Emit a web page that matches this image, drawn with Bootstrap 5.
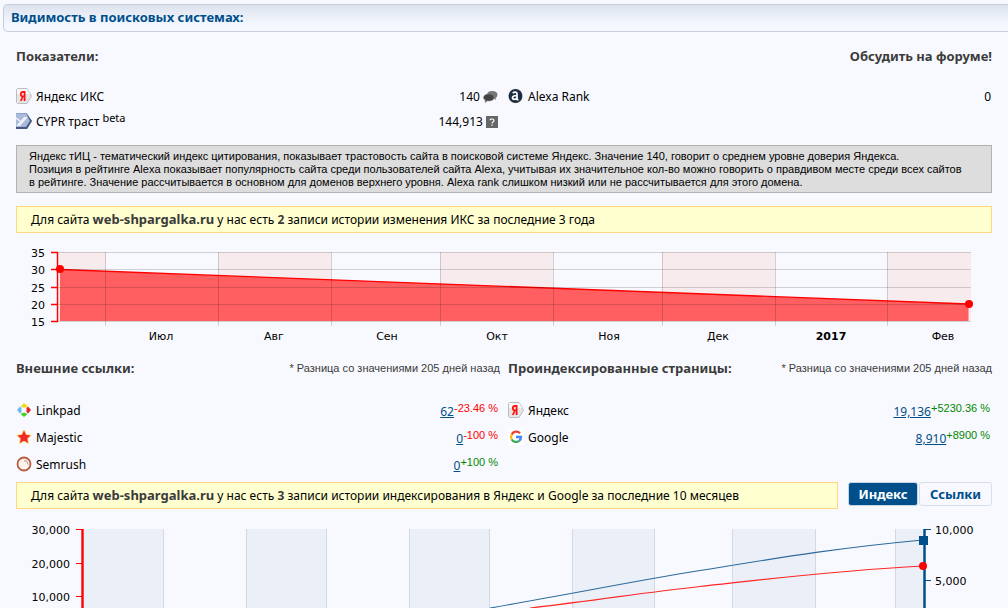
<!DOCTYPE html>
<html lang="ru">
<head>
<meta charset="utf-8">
<meta name="viewport" content="width=device-width, initial-scale=1">
<title>Видимость в поисковых системах</title>
<link href="https://cdn.jsdelivr.net/npm/bootstrap@5.3.0/dist/css/bootstrap.min.css" rel="stylesheet">
<script src="https://cdn.jsdelivr.net/npm/bootstrap@5.3.0/dist/js/bootstrap.bundle.min.js" defer></script>
<style>
  :root { --brand: #004f8b; --page: #f8f9fe; }
  body { background: var(--page); color: #000; font: 12px/16px "Noto Sans", sans-serif; }
  .title-bar { height: 28px; margin: 4px 0 0 3px; padding-left: 7px; border: 1px solid #c5cddd; border-right: 0; border-radius: 5px 0 0 5px; background: linear-gradient(#dde3ee, #f3f7ff 75%, #f5f9ff); }
  .title-bar h1 { font-size: 13px; line-height: 24px; font-weight: 700; color: var(--brand); }
  h2 { font-size: 13px; line-height: 18px; font-weight: 700; color: #3b3b3b; margin: 0; }
  .intro { padding: 15px 0 19px; }
  .section-head { padding: 5px 0 20px; }
  .pair { display: grid; grid-template-columns: 1fr 1fr; column-gap: 8px; }
  .forum { font-size: 13px; line-height: 18px; font-weight: 700; color: #3b3b3b; text-decoration: none; }
  .stats { width: 100%; }
  .stats th { font-weight: 400; padding: 0; }
  .stats td { padding: 0 2px 0 0; text-align: right; }
  .stats svg { display: inline-block; vertical-align: middle; }
  .stats th svg { margin-right: 4px; margin-top: -2px; }
  .metrics tr { height: 25px; }
  .metrics.single td { padding-right: 1px; }
  .links tr { height: 27px; }
  .links td { padding-top: 3px; }
  .links a { color: var(--brand); }
  .delta { font: 11px/12px "Liberation Sans", sans-serif; position: relative; top: -4px; }
  .beta { font-size: 11px; line-height: 12px; top: -4px; vertical-align: baseline; }
  .down { color: #f00; }
  .up { color: #080; }
  .fine { font: 11px/13px "Liberation Sans", sans-serif; }
  .note { color: #3b3b3b; }
  .about { background: #ddd; border: 1px solid #b2b2b2; padding: 4px 12px 3px; margin: 11px 0 13px; }
  .notice { background: #ffffcf; border: 1px solid #ffd783; padding: 0 14px; line-height: 24px; }
  .notice b { color: #3b3b3b; }
  .notice .host { font-size: 13px; }
  .tab { font-size: 13px; line-height: 20px; font-weight: 700; padding: 0; height: 24px; border: 1px solid #d6e0ec; border-radius: 3px; color: var(--brand); }
  .tab.active { background: var(--brand); color: #fff; border-color: #c5d6e6; width: 70px; margin: 0 1px 0 10px; }
  .tab-wide { width: 73px; }
  .plot { width: 100%; height: auto; display: block; font: 11px "DejaVu Sans", sans-serif; }
</style>
</head>
<body>
<svg class="d-none">
  <linearGradient id="tagFill" x2="0" y2="1"><stop stop-color="#fdfdfd"/><stop offset="1" stop-color="#c8c8c8"/></linearGradient>
  <symbol id="yandex" viewBox="0 0 16 16"><path d="M1.500.5h9.500l4.500 7.500-4.500 7.500H1.500l-1-1v-13z" fill="#e6e6e6" stroke="#bdbdbd"/><path d="M1 1h10l3 5H1z" fill="#f8f8f8"/><path d="M8.600 3v10M8.600 4H6.800C4.200 4 4.200 8.300 6.800 8.300h1.800M6.800 8.500 4.800 13" fill="none" stroke="#f11" stroke-width="1.800"/></symbol>
</svg>

<header class="title-bar"><h1 class="m-0">Видимость в поисковых системах:</h1></header>

<main class="px-3">
  <div class="intro d-flex justify-content-between">
    <h2>Показатели:</h2>
    <a class="forum" href="#">Обсудить на форуме!</a>
  </div>

  <div class="pair">
    <table class="stats metrics">
      <tr>
        <th><svg width="16" height="16"><use href="#yandex"/></svg>Яндекс ИКС</th>
        <td>140 <svg width="15" height="12" viewBox="0 0 15 12"><path d="M9 0c3.500 0 5.500 1.500 5.500 3.500S13 7 12.500 7l.8 2-3-1.500C7 8 4 6 4 3.800S6 0 9 0z" fill="#777"/><path d="M6 3c3 0 5 1.500 5 3.600S9 10 6 10l-1.500-.2L2 11.500l.3-2.500C1 8.500.5 7.600.5 6.600.5 4.500 3 3 6 3z" fill="#444" stroke="#888" stroke-width=".5"/></svg></td>
      </tr>
      <tr>
        <th><svg width="16" height="16" viewBox="0 0 16 16"><path d="M0 0h11l5 8-5 8H0z" fill="#8fa4cc"/><path d="M0 14h10l4-6-3.500-7L16 8l-5 8H0z" fill="#465a80"/><path d="M0 1h10l3.500 7L10 13.500H0z" fill="#a9badb"/><path d="m1 13 8-9M3 13 11 4M0 5l4 3" stroke="#f8f9fe" stroke-width="1.200" fill="none"/></svg>CYPR траст <sup class="beta">beta</sup></th>
        <td>144,913 <svg width="12" height="12" viewBox="0 0 12 12"><path d="M0 0h12v12H0z" fill="#666"/><path d="M4 4.300C4 2.500 8 2.500 8 4.500 8 6 6 5.800 6 7.500M6 8.500v1.200" fill="none" stroke="#fff" stroke-width="1.200"/></svg></td>
      </tr>
    </table>
    <table class="stats metrics single align-self-start">
      <tr>
        <th><svg width="16" height="16" viewBox="0 0 16 16"><circle cx="7.500" cy="8" r="7.500" fill="#eee3d2"/><circle cx="7.500" cy="8" r="6.900" fill="#1b2c46"/><path d="M4.800 5.200C6 3.800 9 3.700 9 5.800v5.400c0 .6.500.6 1.500.4M9 7.500c-2.500 0-4.500.5-4.500 2.200C4.500 11.800 8 12 9 9.500" fill="none" stroke="#fff" stroke-width="1.700"/></svg>Alexa Rank</th>
        <td>0</td>
      </tr>
    </table>
  </div>

  <p class="about fine">Яндекс тИЦ - тематический индекс цитирования, показывает трастовость сайта в поисковой системе Яндекс. Значение 140, говорит о среднем уровне доверия Яндекса.<br>Позиция в рейтинге Alexa показывает популярность сайта среди пользователей сайта Alexa, учитывая их значительное кол-во можно говорить о правдивом месте среди всех сайтов<br>в рейтинге. Значение рассчитывается в основном для доменов верхнего уровня. Alexa rank слишком низкий или не рассчитывается для этого домена.</p>

  <p class="notice mb-2">Для сайта <b class="host">web-shpargalka.ru</b> у нас есть <b>2</b> записи истории изменения ИКС за последние 3 года</p>

  <svg class="plot" viewBox="16 242 976 113" role="img" aria-label="История ИКС">
    <path d="M58 253h48v69H58zM218 253h113v69H218zM440 253h113v69H440zM662 253h113v69H662zM887 253h84v69h-84z" fill="#f8ebed"/>
    <path d="M60 270.500 968.500 305v17H60z" fill="#ff5f61"/>
    <path d="M60 270.500 968.500 305" stroke="#f00" stroke-width="1.300"/>
    <path d="M58 253.500h913M58 270.500h913M58 288.500h913M58 305.500h913M58 322.500h913M105.500 253v74M218.500 253v74M331.500 253v74M440.500 253v74M553.500 253v74M662.500 253v74M775.500 253v74M887.500 253v74" stroke="#000" stroke-opacity=".16"/>
    <path d="M57.500 253v70M51 253.500h7M51 270.500h7M51 288.500h7M51 305.500h7M51 322.500h7" stroke="#f00" stroke-width="1.400"/>
    <circle cx="60" cy="270" r="4" fill="#f00"/><circle cx="969" cy="305" r="4" fill="#f00"/>
    <g text-anchor="end"><text x="45" y="258">35</text><text x="45" y="275">30</text><text x="45" y="293">25</text><text x="45" y="310">20</text><text x="45" y="327">15</text></g>
    <g text-anchor="middle"><text x="161" y="341">Июл</text><text x="274" y="341">Авг</text><text x="387" y="341">Сен</text><text x="497" y="341">Окт</text><text x="609" y="341">Ноя</text><text x="718" y="341">Дек</text><text x="831" y="341" font-weight="700">2017</text><text x="943" y="341">Фев</text></g>
  </svg>

  <div class="pair">
    <section>
      <div class="section-head d-flex justify-content-between align-items-center">
        <h2>Внешние ссылки:</h2>
        <small class="fine note text-nowrap">* Разница со значениями 205 дней назад</small>
      </div>
      <table class="stats links">
        <tr>
          <th><svg width="16" height="16" viewBox="0 0 16 16"><path d="M5 4.500 8 1l3.500 3L10 5.500H6.500z" fill="#f6d90c"/><path d="M12 4.500 15 8l-3 3.500L10.500 10V6z" fill="#e82222"/><path d="M4.500 12 8 10.500l3.500 1.500L8 15z" fill="#43d21c"/><path d="M1 8l3-3.500L5.500 6v4L4 11.500z" fill="#6db9e8"/></svg>Linkpad</th>
          <td><a href="#">62</a><span class="delta down">-23.46 %</span></td>
        </tr>
        <tr>
          <th><svg width="16" height="16" viewBox="0 0 16 16"><path d="m8 1.500 2 4.300 4.500.6-3.300 3.100.9 4.500L8 11.700 3.900 14l.9-4.500L1.500 6.400 6 5.800z" fill="#ee2b27" stroke="#fbdf92" stroke-width="2" paint-order="stroke" stroke-linejoin="round"/></svg>Majestic</th>
          <td><a href="#">0</a><span class="delta down">-100 %</span></td>
        </tr>
        <tr>
          <th><svg width="16" height="16" viewBox="0 0 16 16"><circle cx="8" cy="8" r="6.500" fill="#fbf4ee" stroke="#b65c40" stroke-width="1.800"/><path d="M8 4.500a4 4 0 0 1 4 4" fill="none" stroke="#c98b78"/></svg>Semrush</th>
          <td><a href="#">0</a><span class="delta up">+100 %</span></td>
        </tr>
      </table>
    </section>
    <section>
      <div class="section-head d-flex justify-content-between align-items-center">
        <h2>Проиндексированные страницы:</h2>
        <small class="fine note text-nowrap">* Разница со значениями 205 дней назад</small>
      </div>
      <table class="stats links">
        <tr>
          <th><svg width="16" height="16"><use href="#yandex"/></svg>Яндекс</th>
          <td><a href="#">19,136</a><span class="delta up">+5230.36 %</span></td>
        </tr>
        <tr>
          <th><svg width="16" height="16" viewBox="0 0 16 16" fill="none" stroke-width="2.300"><path d="M0 0h16v16H0z" fill="#fff"/><path d="M12 4.300A5 5 0 0 0 3.700 5.500" stroke="#ea4335"/><path d="M3.700 5.500a5 5 0 0 0 0 5" stroke="#fbbc05"/><path d="M3.700 10.500a5 5 0 0 0 7.500 1.300" stroke="#34a853"/><path d="M11.200 11.800A5 5 0 0 0 13 8H8" stroke="#4285f4"/></svg>Google</th>
          <td><a href="#">8,910</a><span class="delta up">+8900 %</span></td>
        </tr>
      </table>
    </section>
  </div>

  <div class="d-flex mt-1">
    <p class="notice flex-fill mb-0">Для сайта <b class="host">web-shpargalka.ru</b> у нас есть <b>3</b> записи истории индексирования в Яндекс и Google за последние 10 месяцев</p>
    <button type="button" class="btn tab active">Индекс</button>
    <button type="button" class="btn tab tab-wide">Ссылки</button>
  </div>

  <svg class="plot mt-2" viewBox="16 517 976 91" role="img" aria-label="История индексирования">
    <path d="M83 529h80v79H83zM246 529h80v79h-80zM409 529h80v79h-80zM572 529h82v79h-82zM732 529h83v79h-83zM895 529h29v79h-29z" fill="#ebeff7"/>
    <path d="M163.500 529v79M246.500 529v79M326.500 529v79M409.500 529v79M489.500 529v79M572.500 529v79M654.500 529v79M732.500 529v79M815.500 529v79M895.500 529v79" stroke="#d4d8e0"/>
    <path d="M82.500 529v79" stroke="#f00" stroke-width="2.400"/><path d="M76 529.500h7M76 563.500h7M76 596.500h7" stroke="#f00"/>
    <path d="M924.500 529v79" stroke="#3f79a6" stroke-width="3"/><path d="M924.500 529v79M925 529.500h6M925 580.500h6" stroke="#004f8b"/>
    <path d="M490 608C560 596 640 580 700 570.500S830 548.500 923 540" fill="none" stroke="#2c6b9c" stroke-width="1.200"/>
    <path d="M530 608C600 600 640 593 700 586.500S830 571 923 566" fill="none" stroke="#ff2626" stroke-width="1.200"/>
    <path d="M919 536h9v9h-9z" fill="#004f8b"/><circle cx="923" cy="566" r="4" fill="#f00"/>
    <g text-anchor="end"><text x="70" y="534">30,000</text><text x="70" y="568">20,000</text><text x="70" y="601">10,000</text></g>
    <text x="935" y="534">10,000</text><text x="935" y="585">5,000</text>
  </svg>
</main>
</body>
</html>
